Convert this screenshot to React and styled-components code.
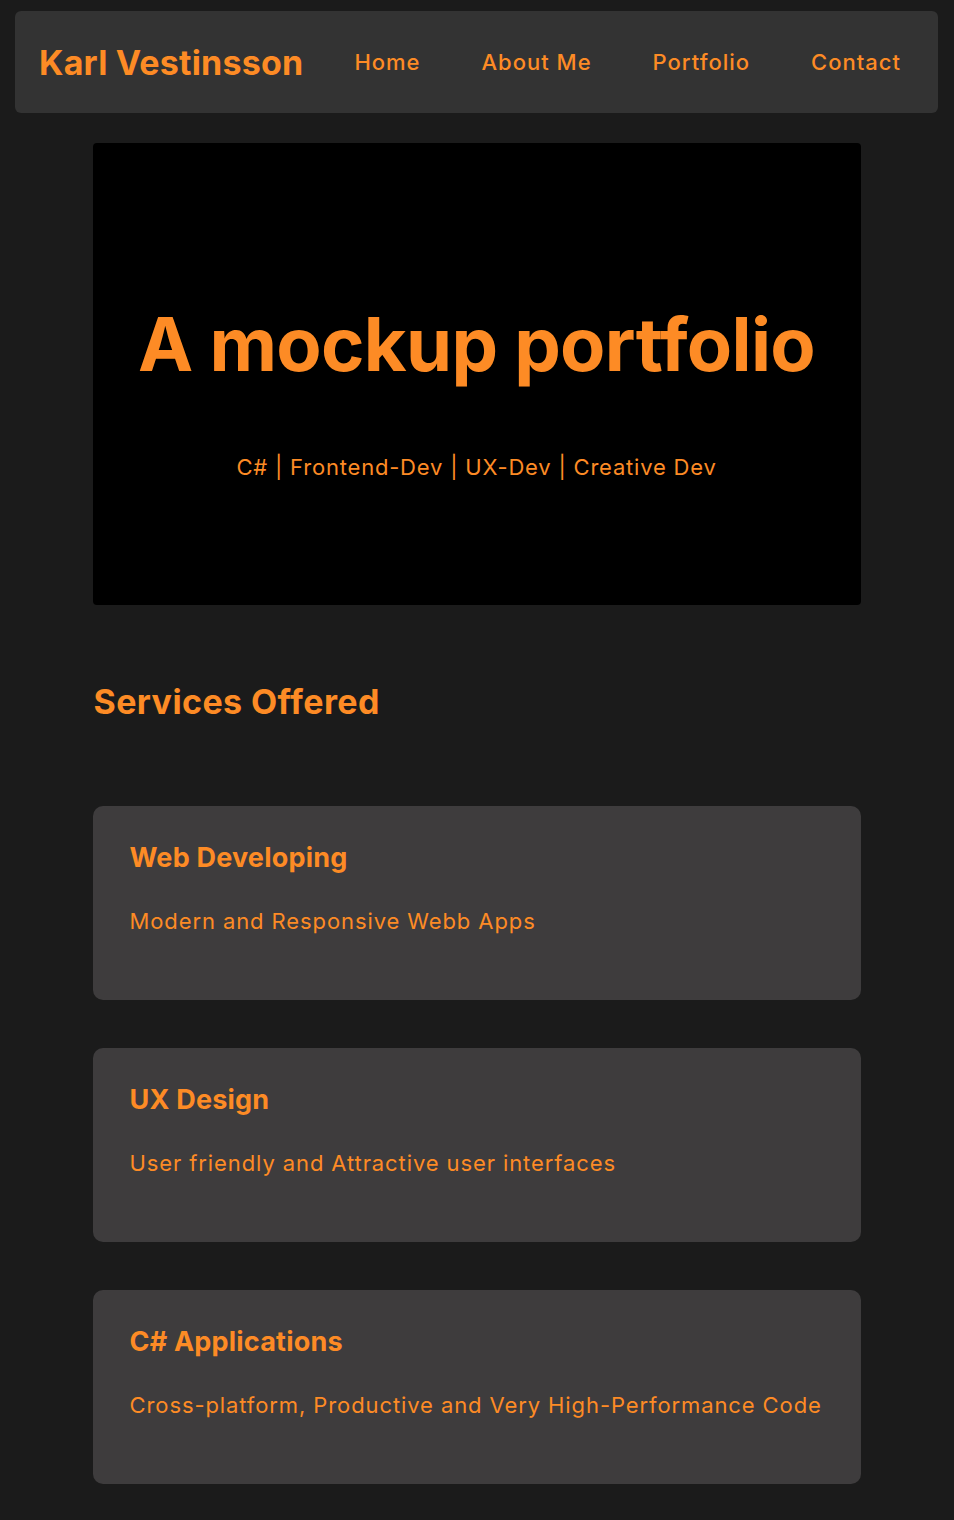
import styled, { createGlobalStyle } from "styled-components";

const services = [
  { title: "Web Developing", text: "Modern and Responsive Webb Apps" },
  { title: "UX Design", text: "User friendly and Attractive user interfaces" },
  { title: "C# Applications", text: "Cross-platform, Productive and Very High-Performance Code" },
];

const App = () => {
  return (
    <>
      <GlobalStyle />
      <Page>
        <Header>
          <Logo>Karl Vestinsson</Logo>
          <Nav>
            <NavLink href="#">Home</NavLink>
            <NavLink href="#">About Me</NavLink>
            <NavLink href="#">Portfolio</NavLink>
            <NavLink href="#">Contact</NavLink>
          </Nav>
        </Header>
        <Main>
          <Hero>
            <HeroTitle>A mockup portfolio</HeroTitle>
            <HeroSub>C# | Frontend-Dev | UX-Dev | Creative Dev</HeroSub>
          </Hero>
          <SectionTitle>Services Offered</SectionTitle>
          <Cards>
            {services.map((s) => (
              <Card key={s.title}>
                <CardTitle>{s.title}</CardTitle>
                <CardText>{s.text}</CardText>
              </Card>
            ))}
          </Cards>
        </Main>
      </Page>
    </>
  );
};
export default App;

const orange = "#fd8b25";

const GlobalStyle = createGlobalStyle`
  body {
    margin: 0;
    background-color: #1b1b1b;
    font-family: Inter, "Liberation Sans", sans-serif;
    color: ${orange};
  }
`;

const Page = styled.div`
  padding: 11px 16px 36px 15px;
`;

const Header = styled.header`
  display: flex;
  align-items: center;
  justify-content: space-between;
  height: 102px;
  padding: 0 37px 0 24px;
  background-color: #333333;
  border-radius: 6px;
`;

const Logo = styled.h1`
  margin: 0;
  font-size: 34px;
  font-weight: 700;
  letter-spacing: 0.2px;
  color: ${orange};
`;

const Nav = styled.nav`
  display: flex;
  gap: 61px;
`;

const NavLink = styled.a`
  font-size: 22px;
  font-weight: 500;
  letter-spacing: 1px;
  color: ${orange};
  text-decoration: none;
`;

const Main = styled.main`
  max-width: 768px;
  margin: 30px auto 0;
`;

const Hero = styled.section`
  display: flex;
  flex-direction: column;
  align-items: center;
  height: 462px;
  box-sizing: border-box;
  padding-top: 157px;
  background-color: #000000;
  border-radius: 4px;
`;

const HeroTitle = styled.h2`
  margin: 0;
  font-size: 74px;
  line-height: 89px;
  font-weight: 700;
  letter-spacing: -0.7px;
  color: ${orange};
`;

const HeroSub = styled.p`
  margin: 65px 0 0;
  font-size: 22px;
  line-height: 27px;
  letter-spacing: 0.8px;
  color: ${orange};
`;

const SectionTitle = styled.h2`
  margin: 76px 0 0;
  padding-left: 1px;
  font-size: 34px;
  line-height: 41px;
  font-weight: 700;
  letter-spacing: 0.4px;
  color: ${orange};
`;

const Cards = styled.div`
  display: flex;
  flex-direction: column;
  gap: 48px;
  margin-top: 84px;
`;

const Card = styled.div`
  height: 194px;
  box-sizing: border-box;
  padding: 36px 37px 0;
  background-color: #3e3c3d;
  border-radius: 10px;
`;

const CardTitle = styled.h3`
  margin: 0;
  font-size: 27px;
  line-height: 32px;
  font-weight: 700;
  letter-spacing: 0.2px;
  color: ${orange};
`;

const CardText = styled.p`
  margin: 34px 0 0;
  font-size: 22px;
  line-height: 27px;
  letter-spacing: 0.9px;
  color: ${orange};
`;
